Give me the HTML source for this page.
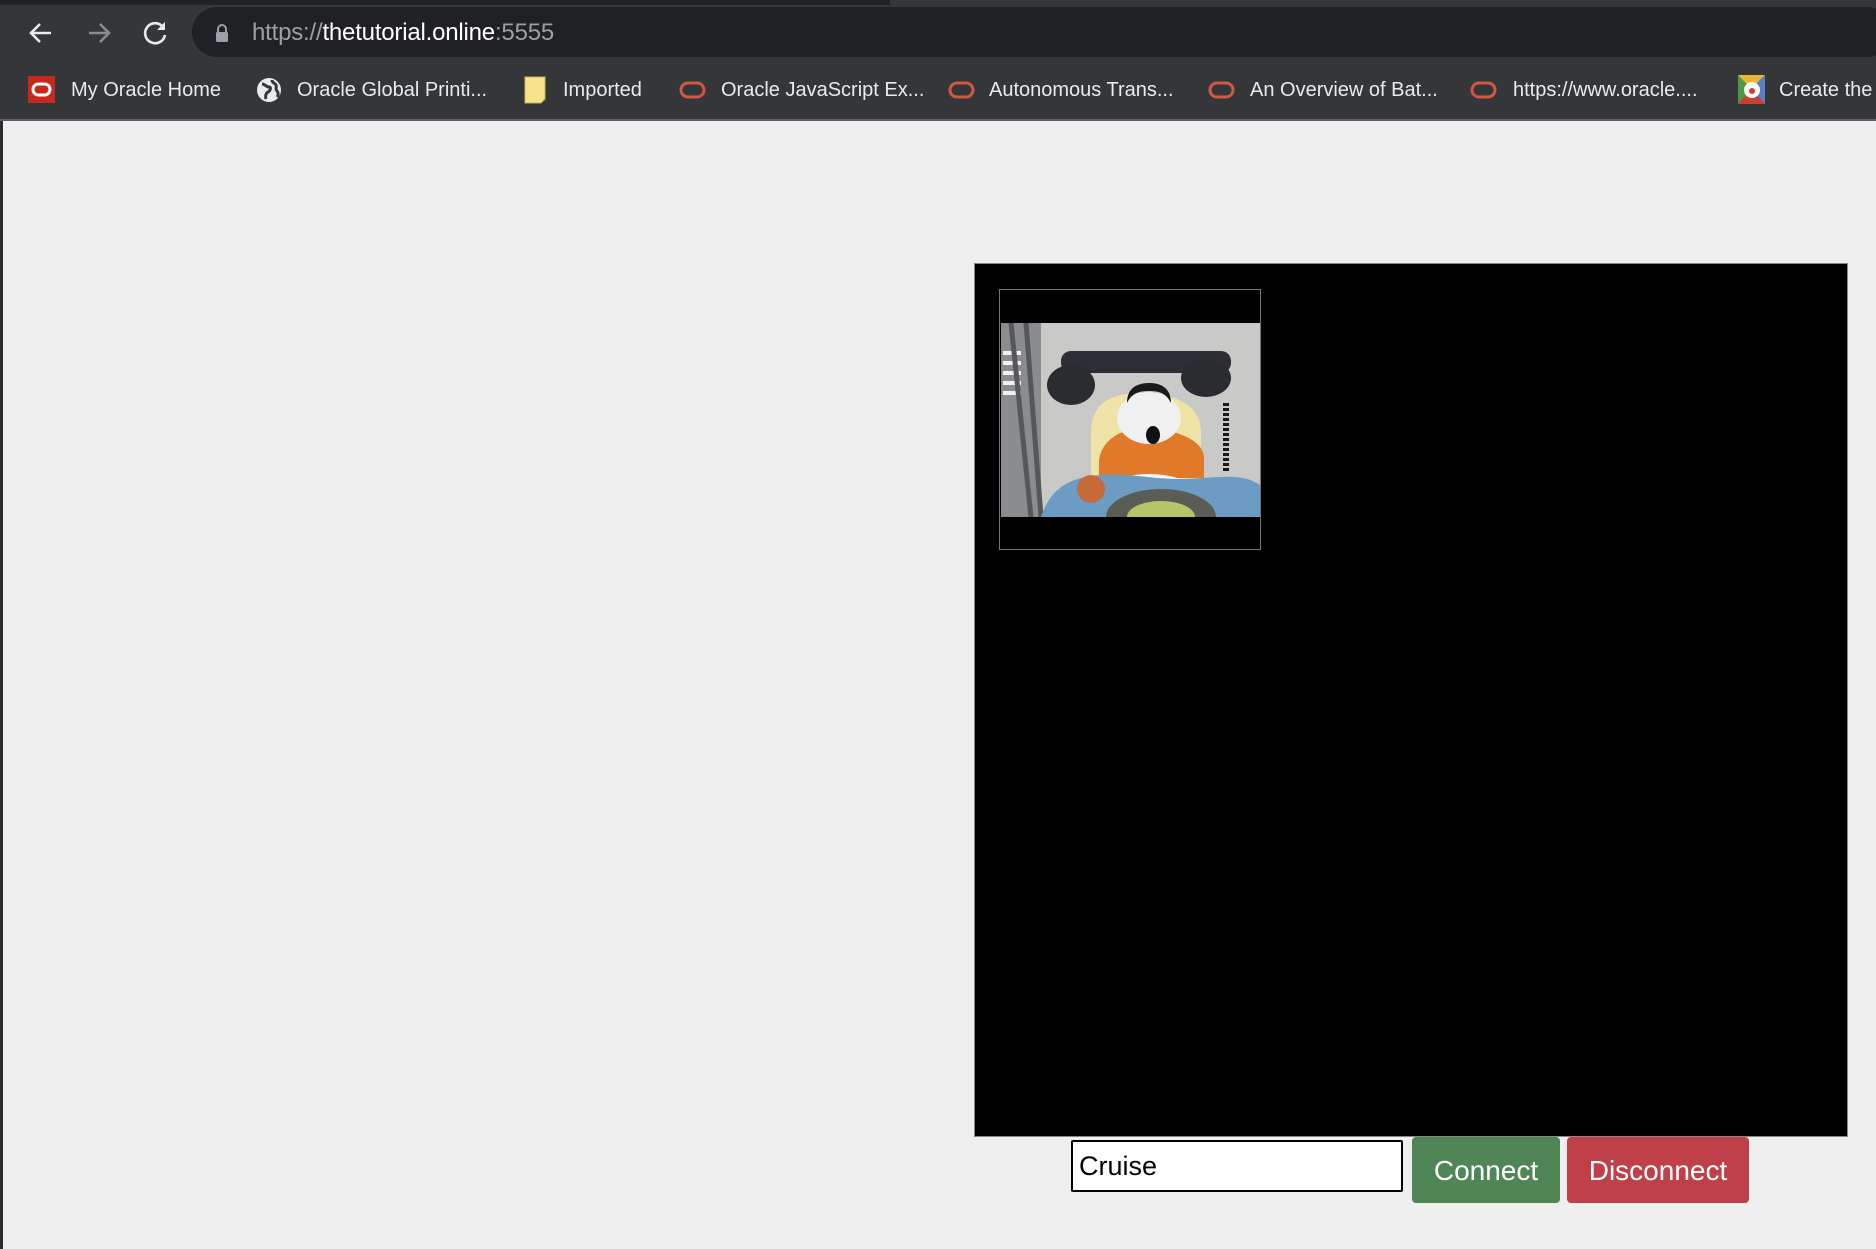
<!DOCTYPE html>
<html><head><meta charset="utf-8">
<style>
*{margin:0;padding:0;box-sizing:border-box}
html,body{width:1876px;height:1249px;overflow:hidden;background:#efefef;font-family:"Liberation Sans",sans-serif}
#top{position:absolute;left:0;top:0;width:1876px;height:119px;background:#35363a}
#tabline{position:absolute;left:0;top:0;width:1876px;height:5px;background:#202124}
#tabline2{position:absolute;left:890px;top:0;width:986px;height:5px;background:#35363a}
#sep{position:absolute;left:0;top:119px;width:1876px;height:2px;background:#5f6063}
#leftedge{position:absolute;left:0;top:121px;width:3px;height:1128px;background:#2b2c2f}
#pill{position:absolute;left:192px;top:7px;width:1700px;height:50px;border-radius:25px;background:#202124}
#url{position:absolute;left:252px;top:19px;font-size:24px;color:#9aa0a6;white-space:nowrap;letter-spacing:-0.2px}
#url b{font-weight:normal;color:#fff}
.bm{position:absolute;top:79px;font-size:20px;color:#e8eaed;white-space:nowrap}
.ic{position:absolute}
#box{position:absolute;left:974px;top:263px;width:874px;height:874px;background:#000;border:1px solid #888}
#thumb{position:absolute;left:999px;top:289px;width:262px;height:261px;background:#000;border:1px solid #777}
#photo{position:absolute;left:1001px;top:323px;width:259px;height:194px;overflow:hidden}
#inp{position:absolute;left:1071px;top:1140px;width:332px;height:52px;background:#fff;border:2px solid #000;border-radius:2px;font-size:27px;padding:9px 6px 0;color:#000}
.btn{position:absolute;top:1137px;height:66px;border-radius:4px;color:#fff;font-size:28px;text-align:center;line-height:68px}
#con{left:1412px;width:148px;background:#508656}
#dis{left:1567px;width:182px;background:#c0404a}
</style></head><body>
<div id="top"></div><div id="tabline"></div><div id="tabline2"></div>
<svg class="ic" style="left:26px;top:18px" width="30" height="30" viewBox="0 0 30 30"><path d="M25 15H6M14 6l-9 9 9 9" stroke="#e8eaed" stroke-width="2.6" fill="none"/></svg>
<svg class="ic" style="left:84px;top:18px" width="30" height="30" viewBox="0 0 30 30"><path d="M5 15h19M16 6l9 9-9 9" stroke="#8a8c90" stroke-width="2.6" fill="none"/></svg>
<svg class="ic" style="left:140px;top:18px" width="30" height="30" viewBox="0 0 30 30"><path d="M23 9a10 10 0 1 0 2 8" stroke="#e8eaed" stroke-width="2.6" fill="none"/><path d="M25 4v8h-8z" fill="#e8eaed"/></svg>
<div id="pill"></div>
<svg class="ic" style="left:214px;top:23px" width="16" height="20" viewBox="0 0 16 20"><path d="M4 9V6a4 4 0 0 1 8 0v3" stroke="#9aa0a6" stroke-width="2" fill="none"/><rect x="2" y="9" width="12" height="10" rx="1.5" fill="#9aa0a6"/></svg>
<div id="url">https://<b>thetutorial.online</b>:5555</div>

<svg class="ic" style="left:28px;top:76px" width="27" height="27" viewBox="0 0 27 27"><rect width="27" height="27" fill="#c5281c"/><rect x="5" y="8" width="17" height="11" rx="5.5" stroke="#fff" stroke-width="3" fill="none"/></svg>
<div class="bm" style="left:71px">My Oracle Home</div>
<svg class="ic" style="left:256px;top:77px" width="26" height="26" viewBox="0 0 26 26"><circle cx="13" cy="13" r="12" fill="#e8eaed"/><path d="M6 7c3 0 4 3 7 3s1 4-1 5-3 4-2 7M16 3c0 3 3 3 4 5s-1 4 1 6 1 5 0 6" stroke="#35363a" stroke-width="3" fill="none"/></svg>
<div class="bm" style="left:297px">Oracle Global Printi...</div>
<svg class="ic" style="left:524px;top:76px" width="22" height="28" viewBox="0 0 22 28"><path d="M1 1h20v22l-4 4H1z" fill="#f9e38a" stroke="#c9b45a"/></svg>
<div class="bm" style="left:563px">Imported</div>
<svg class="ic" style="left:679px;top:80px" width="27" height="20" viewBox="0 0 27 20"><rect x="2" y="3" width="23" height="14" rx="7" stroke="#cf5a3e" stroke-width="3" fill="none"/></svg>
<div class="bm" style="left:721px">Oracle JavaScript Ex...</div>
<svg class="ic" style="left:948px;top:80px" width="27" height="20" viewBox="0 0 27 20"><rect x="2" y="3" width="23" height="14" rx="7" stroke="#cf5a3e" stroke-width="3" fill="none"/></svg>
<div class="bm" style="left:989px">Autonomous Trans...</div>
<svg class="ic" style="left:1208px;top:80px" width="27" height="20" viewBox="0 0 27 20"><rect x="2" y="3" width="23" height="14" rx="7" stroke="#cf5a3e" stroke-width="3" fill="none"/></svg>
<div class="bm" style="left:1250px">An Overview of Bat...</div>
<svg class="ic" style="left:1470px;top:80px" width="27" height="20" viewBox="0 0 27 20"><rect x="2" y="3" width="23" height="14" rx="7" stroke="#cf5a3e" stroke-width="3" fill="none"/></svg>
<div class="bm" style="left:1513px">https://www.oracle....</div>
<svg class="ic" style="left:1738px;top:75px" width="27" height="29" viewBox="0 0 27 29"><path d="M0 0h27L13 14z" fill="#e8b830"/><path d="M0 0v29L13 14z" fill="#4a9a4a"/><path d="M27 0v29L13 14z" fill="#5b7fc8"/><path d="M0 29h27L13 14z" fill="#c8402e"/><circle cx="14" cy="15" r="8" fill="#fff"/><circle cx="14" cy="16" r="3" fill="#c8402e"/></svg>
<div class="bm" style="left:1779px">Create the</div>

<div id="sep"></div><div id="leftedge"></div>

<div id="box"></div>
<div id="thumb"></div>
<div id="photo">
<svg width="259" height="194" viewBox="0 0 259 194">
<rect width="259" height="194" fill="#c9cac8"/>
<rect x="0" y="0" width="40" height="194" fill="#8a8c90"/>
<path d="M2 30h18M2 40h18M2 50h18M2 60h18M2 70h18" stroke="#f2f2f2" stroke-width="4"/>
<path d="M10 0l20 194M25 0l15 194" stroke="#55575a" stroke-width="5"/>
<path d="M90 110c0-30 20-40 50-40s60 10 60 40v50H90z" fill="#efe3a8"/>
<path d="M98 140c0-20 20-35 45-35s60 10 60 30v20H98z" fill="#e07a2a"/>
<ellipse cx="148" cy="165" rx="40" ry="14" fill="#f4f4f4"/>
<ellipse cx="148" cy="95" rx="32" ry="26" fill="#f0f0f0"/>
<path d="M126 80c0-15 10-20 22-20s22 5 22 20c-5-10-12-12-22-12s-17 2-22 12z" fill="#1a1a1a"/>
<ellipse cx="152" cy="112" rx="7" ry="9" fill="#111"/>
<rect x="60" y="28" width="170" height="22" rx="10" fill="#2c2e33"/>
<ellipse cx="70" cy="62" rx="24" ry="20" fill="#2a2c30"/>
<ellipse cx="205" cy="55" rx="25" ry="19" fill="#2a2c30"/>
<path d="M225 80v70" stroke="#1a1a1a" stroke-width="6" stroke-dasharray="3 2"/>
<path d="M40 194c10-30 30-40 60-42s50 4 80 4 60 -8 79 6v32z" fill="#6c9cc4"/>
<circle cx="90" cy="166" r="14" fill="#c76a3a"/>
<ellipse cx="160" cy="194" rx="55" ry="28" fill="#5a5c56"/>
<ellipse cx="160" cy="194" rx="34" ry="16" fill="#b8c46a"/>
</svg>
</div>

<div id="inp">Cruise</div>
<div class="btn" id="con">Connect</div>
<div class="btn" id="dis">Disconnect</div>
</body></html>
